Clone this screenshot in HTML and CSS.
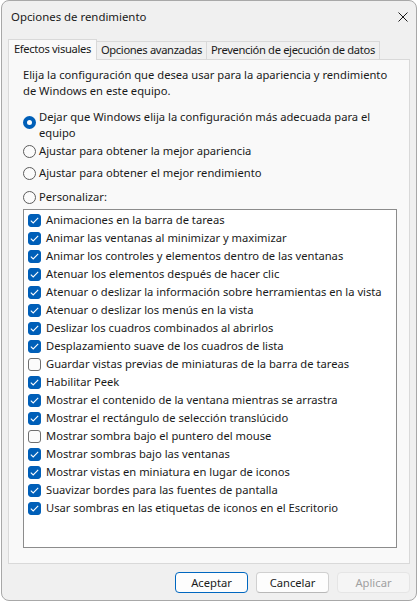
FILE: index.html
```html
<!DOCTYPE html>
<html>
<head>
    <title>Opciones de rendimiento</title>
    <link rel="stylesheet" href="styles.css">
</head>
<body>
    <div class="window">
        <div class="titlebar">
            <span class="title">Opciones de rendimiento</span>
            <svg class="close" width="10" height="10" viewBox="0 0 10 10">
                <path d="M0.5 0.5 L9.5 9.5 M9.5 0.5 L0.5 9.5" stroke="#1a1a1a" stroke-width="1" fill="none"/>
            </svg>
        </div>

        <div class="tabs">
            <div class="tab active">Efectos visuales</div>
            <div class="tab">Opciones avanzadas</div>
            <div class="tab">Prevención de ejecución de datos</div>
        </div>

        <div class="panel">
            <p class="intro">Elija la configuración que desea usar para la apariencia y rendimiento de Windows en este equipo.</p>

            <div class="radios">
                <label class="radio checked"><span class="dot"></span><span>Dejar que Windows elija la configuración más adecuada para el equipo</span></label>
                <label class="radio"><span class="dot"></span><span>Ajustar para obtener la mejor apariencia</span></label>
                <label class="radio"><span class="dot"></span><span>Ajustar para obtener el mejor rendimiento</span></label>
                <label class="radio"><span class="dot"></span><span>Personalizar:</span></label>
            </div>

            <div class="list" id="effects"></div>
        </div>

        <div class="buttons">
            <button class="btn default">Aceptar</button>
            <button class="btn">Cancelar</button>
            <button class="btn disabled">Aplicar</button>
        </div>
    </div>

    <script>
        const effects = [
            ['Animaciones en la barra de tareas', true],
            ['Animar las ventanas al minimizar y maximizar', true],
            ['Animar los controles y elementos dentro de las ventanas', true],
            ['Atenuar los elementos después de hacer clic', true],
            ['Atenuar o deslizar la información sobre herramientas en la vista', true],
            ['Atenuar o deslizar los menús en la vista', true],
            ['Deslizar los cuadros combinados al abrirlos', true],
            ['Desplazamiento suave de los cuadros de lista', true],
            ['Guardar vistas previas de miniaturas de la barra de tareas', false],
            ['Habilitar Peek', true],
            ['Mostrar el contenido de la ventana mientras se arrastra', true],
            ['Mostrar el rectángulo de selección translúcido', true],
            ['Mostrar sombra bajo el puntero del mouse', false],
            ['Mostrar sombras bajo las ventanas', true],
            ['Mostrar vistas en miniatura en lugar de iconos', true],
            ['Suavizar bordes para las fuentes de pantalla', true],
            ['Usar sombras en las etiquetas de iconos en el Escritorio', true]
        ];

        const tick = '<svg width="9" height="7" viewBox="0 0 9 7"><path d="M0.8 3.6 L3.2 5.9 L8.2 0.9" stroke="#fff" stroke-width="1.1" fill="none"/></svg>';

        const list = document.getElementById('effects');
        effects.forEach(([text, on]) => {
            const row = document.createElement('div');
            row.className = 'item';
            row.innerHTML = `<span class="box${on ? ' on' : ''}">${on ? tick : ''}</span><span>${text}</span>`;
            list.appendChild(row);
        });
    </script>
</body>
</html>
```

FILE: styles.css
```css
* {
    box-sizing: border-box;
    margin: 0;
    padding: 0;
}

body {
    font-family: 'Segoe UI', 'Noto Sans', sans-serif;
    font-size: 11.2px;
    line-height: 16px;
    color: #1a1a1a;
    background: #ffffff;
}

.window {
    width: 416px;
    height: 601px;
    margin-left: 1px;
    background: #f0f0f0;
    border: 1px solid #a8a8a8;
    border-radius: 8px;
    display: flex;
    flex-direction: column;
}

.titlebar {
    height: 31px;
    display: flex;
    align-items: center;
    justify-content: space-between;
    padding: 0 8px 0 9px;
}

.title {
    font-size: 11.4px;
}

.tabs {
    display: flex;
    align-items: flex-end;
    height: 27px;
    padding-left: 6px;
}

.tab {
    height: 18px;
    padding: 0 4px;
    border: 1px solid #d9d9d9;
    border-bottom: none;
    border-left: none;
    background: #f0f0f0;
    line-height: 16px;
    letter-spacing: -0.35px;
    white-space: nowrap;
}

.tab.active {
    height: 21px;
    padding: 1px 5px 0;
    background: #f9f9f9;
    border-left: 1px solid #d9d9d9;
    margin-bottom: -1px;
    position: relative;
}

.panel {
    margin: 0 6px 0 6px;
    height: 505px;
    background: #f9f9f9;
    border: 1px solid #d9d9d9;
    padding: 7px 12px 15px 14px;
    display: flex;
    flex-direction: column;
}

.intro {
    margin-bottom: 10px;
}

.radios {
    display: flex;
    flex-direction: column;
}

.radio {
    display: flex;
    gap: 3px;
}

.radio:nth-child(1) {
    margin-bottom: 2px;
}

.radio:nth-child(2) {
    margin-bottom: 6px;
}

.radio:nth-child(3) {
    margin-bottom: 8px;
}

.dot {
    flex: none;
    width: 13px;
    height: 13px;
    margin-top: 2px;
    border: 1px solid #5c5c5c;
    border-radius: 50%;
    background: #fbfbfb;
}

.radio.checked .dot {
    margin-top: 7px;
    background: #fff;
    border: 4px solid #005fb8;
}

.list {
    margin-top: 4px;
    flex: 1;
    background: #ffffff;
    border: 1px solid #8c8c8c;
    padding: 1px 4px;
}

.item {
    display: flex;
    align-items: center;
    height: 18px;
    gap: 5px;
    white-space: nowrap;
}

.box {
    flex: none;
    width: 13px;
    height: 13px;
    border: 1px solid #6f6f6f;
    border-radius: 3px;
    background: #fbfbfb;
    display: flex;
    align-items: center;
    justify-content: center;
}

.box.on {
    background: #005fb8;
    border-color: #005fb8;
}

.buttons {
    display: flex;
    justify-content: flex-end;
    gap: 8px;
    padding: 8px 6px 0 0;
}

.btn {
    width: 73px;
    height: 21px;
    font-family: inherit;
    font-size: 11.2px;
    color: #1a1a1a;
    background: #fdfdfd;
    border: 1px solid #d0d0d0;
    border-bottom-color: #b8b8b8;
    border-radius: 4px;
}

.btn.default {
    border: 1px solid #0067c0;
}

.btn.disabled {
    color: #a0a0a0;
    background: #f5f5f5;
    border-color: #e5e5e5;
}
```
